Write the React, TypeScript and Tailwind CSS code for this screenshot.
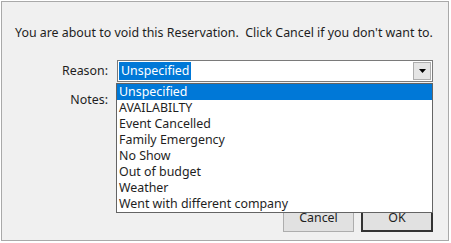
const reasons = [
  'Unspecified',
  'AVAILABILTY',
  'Event Cancelled',
  'Family Emergency',
  'No Show',
  'Out of budget',
  'Weather',
  'Went with different company',
]

const font = { fontFamily: '"Noto Sans", "Liberation Sans", Arial, sans-serif' }

export default function App() {
  return (
    <div className="h-[243px] w-[451px] bg-white pl-px pt-px text-[12.4px] text-[#1e1e1e]" style={font}>
      <div className="relative h-[240px] w-[448px] border border-[#a9a9a9] bg-[#f0f0f0]">
        <p className="pl-[13px] pt-[23px] leading-[16px]">
          You are about to void this Reservation.&nbsp; Click Cancel if you don&apos;t want to.
        </p>

        <div className="mt-[19px] flex items-center">
          <span className="w-[115px] pr-[9px] text-right">Reason:</span>
          <div className="flex h-[22px] w-[316px] items-center border border-[#7a7a7a] bg-white pl-px">
            <span className="bg-[#0078d7] px-[2px] leading-[18px] text-white">Unspecified</span>
            <span className="ml-auto mr-px flex h-[18px] w-[18px] items-center justify-center border border-[#adadad] bg-[#e5e5e5]">
              <svg width="7" height="4" viewBox="0 0 7 4">
                <path d="M0 0h7L3.5 4z" fill="#000" />
              </svg>
            </span>
          </div>
        </div>

        <div className="mt-[10px] flex">
          <span className="w-[115px] pr-[9px] text-right leading-[16px]">Notes:</span>
        </div>

        <div className="absolute left-[281px] top-[203px] flex gap-[7px]">
          <button
            type="button"
            className="h-[27px] w-[71px] border border-[#adadad] bg-[#e1e1e1] text-[12.4px] text-[#1e1e1e]"
          >
            Cancel
          </button>
          <button
            type="button"
            className="h-[27px] w-[72px] border-2 border-[#333] bg-[#e1e1e1] text-[12.4px] text-[#1e1e1e]"
          >
            OK
          </button>
        </div>

        <ul className="absolute left-[114px] top-[81px] w-[317px] border border-[#646464] bg-white">
          {reasons.map((r, i) => (
            <li
              key={r}
              className={`h-[16px] pl-[2px] leading-[16px] ${i === 0 ? 'bg-[#0078d7] text-white' : 'text-[#1e1e1e]'}`}
            >
              {r}
            </li>
          ))}
        </ul>
      </div>
    </div>
  )
}
